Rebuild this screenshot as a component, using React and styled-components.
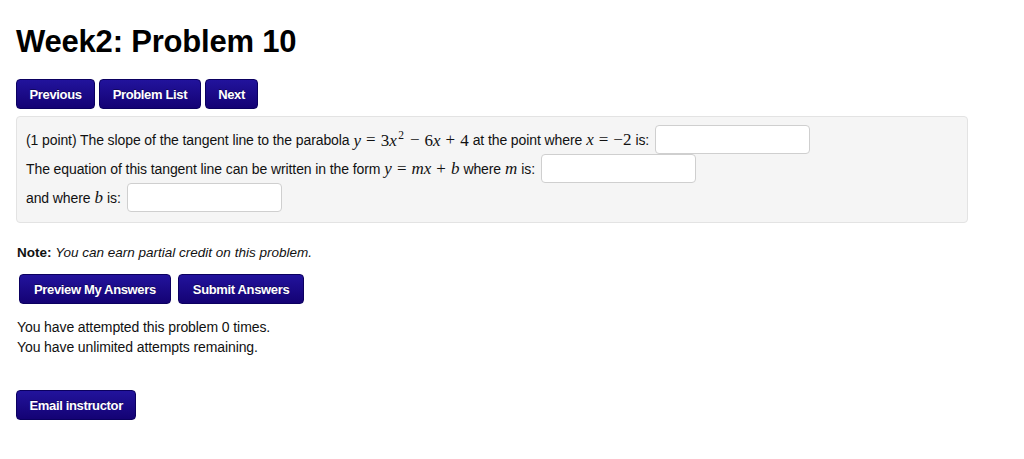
import React from "react";
import styled, { createGlobalStyle } from "styled-components";

const Global = createGlobalStyle`
  html, body { margin: 0; padding: 0; background: #fff; }
  body {
    font-family: "Liberation Sans", Arial, Helvetica, sans-serif;
    color: #111;
    font-size: 14px;
  }
`;

const Page = styled.div`
  padding: 25px 16px 0 16px;
  width: 952px;
`;

const Title = styled.h1`
  margin: 0;
  font-size: 31px;
  line-height: 34px;
  font-weight: bold;
  letter-spacing: -0.2px;
  color: #000;
`;

const ButtonRow = styled.div`
  display: flex;
  gap: ${(p) => p.$gap || 4}px;
  margin: ${(p) => p.$margin || "0"};
`;

const Button = styled.button`
  height: 30px;
  padding: 0 ${(p) => p.$pad || 12.5}px;
  border: 1px solid #0b0060;
  border-radius: 4px;
  background: linear-gradient(#22139c, #140274);
  color: #fff;
  font-family: "Liberation Sans", Arial, sans-serif;
  font-weight: bold;
  font-size: 13px;
  letter-spacing: -0.35px;
  text-shadow: 0 -1px 0 rgba(0, 0, 0, 0.35);
  cursor: pointer;
`;

const ProblemBox = styled.div`
  margin-top: 7px;
  background: #f5f5f5;
  border: 1px solid #e3e3e3;
  border-radius: 4px;
  padding: 8px 9px 10px 9px;
`;

const Line = styled.div`
  display: flex;
  align-items: center;
  height: 29px;
  white-space: pre;
  font-size: 14px;
  letter-spacing: -0.1px;
`;

const Formula = styled.span`
  font-family: "Liberation Serif", "Times New Roman", serif;
  font-size: 17px;
  letter-spacing: 0;
  margin: 0 4px;
`;

const V = styled.i`
  font-style: italic;
`;

const Sup = styled.sup`
  font-size: 11.5px;
  margin: 0 1px 0 1.5px;
`;

const Op = styled.span`
  margin: 0 5px;
`;

const AnswerInput = styled.input`
  box-sizing: border-box;
  width: 155px;
  height: 29px;
  margin-left: 6px;
  border: 1px solid #cfcfcf;
  border-radius: 4px;
  background: #fff;
  padding: 4px 6px;
  font-size: 13px;
`;

const Note = styled.p`
  margin: 22px 0 0 1px;
  font-size: 13.5px;
  em { font-style: italic; }
`;

const Info = styled.p`
  margin: 13px 0 0 1px;
  font-size: 14px;
  line-height: 20px;
  letter-spacing: -0.1px;
`;

export default function App() {
  return (
    <>
      <Global />
      <Page>
        <Title>Week2: Problem 10</Title>
        <ButtonRow $margin="20px 0 0 0">
          <Button>Previous</Button>
          <Button>Problem List</Button>
          <Button>Next</Button>
        </ButtonRow>

        <ProblemBox>
          <Line>
            (1 point) The slope of the tangent line to the parabola
            <Formula>
              <V>y</V>
              <Op>=</Op>3<V>x</V>
              <Sup>2</Sup>
              <Op>−</Op>6<V>x</V>
              <Op>+</Op>4
            </Formula>
            at the point where
            <Formula>
              <V>x</V>
              <Op>=</Op>−2
            </Formula>
            is:
            <AnswerInput />
          </Line>
          <Line>
            The equation of this tangent line can be written in the form
            <Formula>
              <V>y</V>
              <Op>=</Op>
              <V>mx</V>
              <Op>+</Op>
              <V>b</V>
            </Formula>
            where
            <Formula>
              <V>m</V>
            </Formula>
            is:
            <AnswerInput />
          </Line>
          <Line>
            and where
            <Formula>
              <V>b</V>
            </Formula>
            is:
            <AnswerInput />
          </Line>
        </ProblemBox>

        <Note>
          <b>Note:</b> <em>You can earn partial credit on this problem.</em>
        </Note>

        <ButtonRow $gap={7} $margin="14px 0 0 3px">
          <Button $pad={14}>Preview My Answers</Button>
          <Button $pad={14}>Submit Answers</Button>
        </ButtonRow>

        <Info>
          You have attempted this problem 0 times.
          <br />
          You have unlimited attempts remaining.
        </Info>

        <ButtonRow $margin="33px 0 0 0">
          <Button>Email instructor</Button>
        </ButtonRow>
      </Page>
    </>
  );
}
